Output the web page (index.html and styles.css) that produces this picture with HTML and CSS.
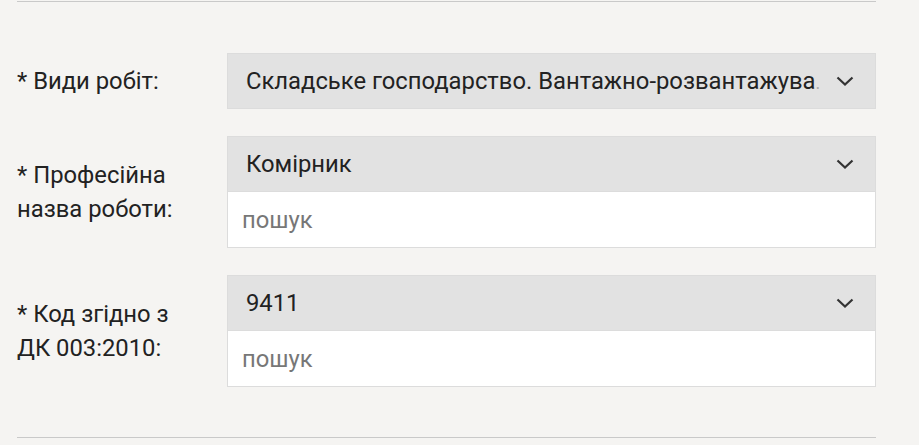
FILE: index.html
```html
<!DOCTYPE html>
<html lang="uk">
<head>
<meta charset="utf-8">
<link rel="stylesheet" href="styles.css">
</head>
<body>
<div class="form">
  <div class="row">
    <div class="label">* Види робіт:</div>
    <div class="field">
      <div class="select"><span class="value">Складське господарство. Вантажно-розвантажува<span class="fade">.</span></span><svg class="chev" width="18" height="10" viewBox="0 0 18 10"><path d="M1.5 1.5 L9 8.5 L16.5 1.5" fill="none" stroke="#333" stroke-width="2.2"/></svg></div>
    </div>
  </div>
  <div class="row">
    <div class="label">* Професійна<br>назва роботи:</div>
    <div class="field">
      <div class="select"><span class="value">Комірник</span><svg class="chev" width="18" height="10" viewBox="0 0 18 10"><path d="M1.5 1.5 L9 8.5 L16.5 1.5" fill="none" stroke="#333" stroke-width="2.2"/></svg></div>
      <div class="search">пошук</div>
    </div>
  </div>
  <div class="row">
    <div class="label">* Код згідно з<br>ДК 003:2010:</div>
    <div class="field">
      <div class="select"><span class="value">9411</span><svg class="chev" width="18" height="10" viewBox="0 0 18 10"><path d="M1.5 1.5 L9 8.5 L16.5 1.5" fill="none" stroke="#333" stroke-width="2.2"/></svg></div>
      <div class="search">пошук</div>
    </div>
  </div>
</div>
</body>
</html>
```
FILE: styles.css
```css
html, body {
  margin: 0;
  background: #f5f4f2;
}
body {
  font-family: Roboto, "Liberation Sans", sans-serif;
  font-size: 23.8px;
  color: #222;
  padding-top: 1px;
}
.form {
  margin-left: 17px;
  width: 859px;
  border-top: 1px solid #c9c9c9;
  border-bottom: 1px solid #c9c9c9;
  padding: 51px 0 50px;
  display: flex;
  flex-direction: column;
  gap: 27px;
}
.row {
  display: flex;
  align-items: center;
}
.label {
  width: 210px;
  flex: none;
  line-height: 34px;
  color: #222;
}
.field {
  flex: 1;
  min-width: 0;
  display: flex;
  flex-direction: column;
}
.select {
  height: 56px;
  box-sizing: border-box;
  background: #e2e2e2;
  border: 1px solid #dcdcdc;
  display: flex;
  align-items: center;
  padding: 0 21px 0 18px;
  gap: 14px;
  min-width: 0;
}
.value {
  flex: 1;
  min-width: 0;
  white-space: nowrap;
  overflow: hidden;
  color: #222;
}
.fade {
  color: #aaa;
  font-size: 18px;
}
.chev {
  flex: none;
}
.search {
  height: 56px;
  box-sizing: border-box;
  background: #fff;
  border: 1px solid #dcdcdc;
  border-top: none;
  display: flex;
  align-items: center;
  padding-left: 14px;
  color: #777;
}
```
